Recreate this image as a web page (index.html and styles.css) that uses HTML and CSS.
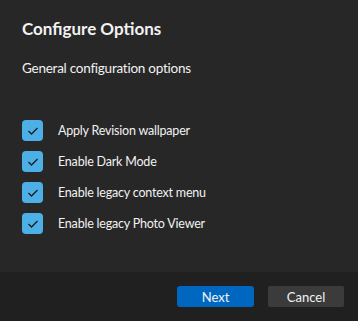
FILE: index.html
```html
<!DOCTYPE html>
<html lang="en">
<head>
  <meta charset="UTF-8" />
  <title>Configure Options</title>
  <link rel="stylesheet" href="styles.css">
</head>
<body>

<div class="dialog">
  <div class="content">
    <h1 class="title">Configure Options</h1>
    <p class="subtitle">General configuration options</p>

    <ul class="options">
      <li class="option">
        <span class="check"><svg viewBox="0 0 21 21"><path d="M6.5 11 L9.5 14 L15.5 8" /></svg></span>
        <span class="label">Apply Revision wallpaper</span>
      </li>
      <li class="option">
        <span class="check"><svg viewBox="0 0 21 21"><path d="M6.5 11 L9.5 14 L15.5 8" /></svg></span>
        <span class="label">Enable Dark Mode</span>
      </li>
      <li class="option">
        <span class="check"><svg viewBox="0 0 21 21"><path d="M6.5 11 L9.5 14 L15.5 8" /></svg></span>
        <span class="label">Enable legacy context menu</span>
      </li>
      <li class="option">
        <span class="check"><svg viewBox="0 0 21 21"><path d="M6.5 11 L9.5 14 L15.5 8" /></svg></span>
        <span class="label">Enable legacy Photo Viewer</span>
      </li>
    </ul>
  </div>

  <div class="footer">
    <button class="btn btn-primary">Next</button>
    <button class="btn btn-secondary">Cancel</button>
  </div>
</div>

</body>
</html>
```

FILE: styles.css
```css
:root {
  --panel-bg: #272727;
  --footer-bg: #202020;
  --accent: #4cb0e6;
  --primary: #0067c0;
  --secondary: #3b3b3b;
  --text: #f2f2f2;
}

* {
  box-sizing: border-box;
}

body {
  margin: 0;
  font-family: 'Lato', sans-serif;
  background-color: var(--panel-bg);
  color: var(--text);
}

.dialog {
  width: 358px;
  height: 321px;
  display: flex;
  flex-direction: column;
}

.content {
  flex: 1;
  padding: 17px 22px 0;
}

.title {
  margin: 0;
  font-size: 17px;
  line-height: 24px;
  font-weight: 700;
}

.subtitle {
  margin: 17px 0 0;
  font-size: 13.5px;
  line-height: 20px;
  letter-spacing: -0.25px;
}

.options {
  list-style: none;
  margin: 42px 0 0;
  padding: 0;
  display: flex;
  flex-direction: column;
  gap: 10px;
}

.option {
  display: flex;
  align-items: center;
  gap: 15px;
  height: 21px;
}

.check {
  width: 21px;
  height: 21px;
  border-radius: 4px;
  background-color: var(--accent);
  display: flex;
}

.check svg {
  width: 21px;
  height: 21px;
  fill: none;
  stroke: #1b1b1b;
  stroke-width: 1.3;
}

.label {
  font-size: 12.5px;
  letter-spacing: -0.2px;
}

.footer {
  height: 49px;
  background-color: var(--footer-bg);
  display: flex;
  justify-content: flex-end;
  align-items: center;
  gap: 14px;
  padding: 0 14px 0 0;
}

.btn {
  width: 77px;
  height: 21px;
  border: none;
  border-radius: 3px;
  font-family: inherit;
  font-size: 13px;
  color: var(--text);
  padding: 0;
}

.btn-primary {
  background-color: var(--primary);
}

.btn-secondary {
  width: 76px;
  background-color: var(--secondary);
  border-radius: 2px;
}
```
